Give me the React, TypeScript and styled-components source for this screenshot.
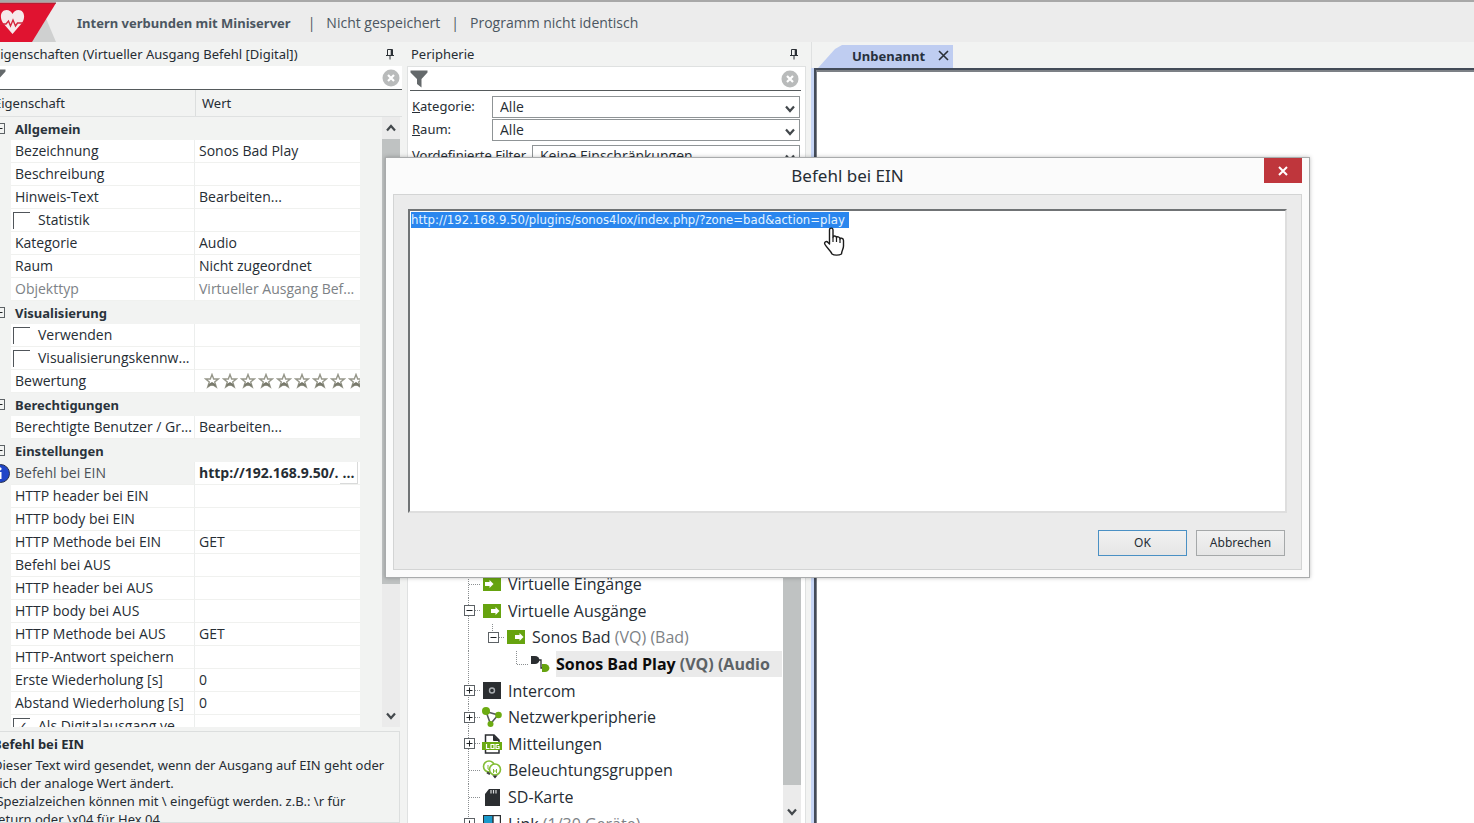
import React, { useEffect, useRef } from "react";
import styled, { createGlobalStyle, css } from "styled-components";

const GlobalStyle = createGlobalStyle`
  * { box-sizing: border-box; }
  body {
    margin: 0;
    overflow: hidden;
    background: #f2f3f2;
    color: #262d34;
    font: 13px/18px "Noto Sans", "Open Sans", sans-serif;
  }
  button, select, input, textarea { font: inherit; color: inherit; margin: 0; }
  p, h1, h2 { margin: 0; font-size: inherit; }
`;

const listFont = '"Open Sans", "Noto Sans", sans-serif';

const Shell = styled.div`
  display: flex;
  flex-direction: column;
  height: 100vh;
  overflow: hidden;
  position: relative;
`;

/* ---------- status bar ---------- */

const StatusBar = styled.header`
  display: flex;
  flex: none;
  height: 42px;
  border-top: 2px solid #a8a8a8;
  background: #ececec;
  color: #4b5661;
`;

const StatusLogo = styled.svg`
  width: 56px;
  height: 40px;
  margin-right: 21px;
`;

const StatusItem = styled.span<{ $strong?: boolean }>`
  align-self: center;
  margin-right: ${(p) => (p.$strong ? 6 : 0)}px;
  padding-top: 2px;
  white-space: nowrap;
  font-family: ${(p) => (p.$strong ? "inherit" : listFont)};
  font-size: ${(p) => (p.$strong ? 13 : 14)}px;
  font-weight: ${(p) => (p.$strong ? 700 : 400)};
  &:not(:first-of-type)::before {
    content: "|";
    margin: 0 11px;
  }
`;

/* ---------- shared panel parts ---------- */

const Workspace = styled.main`
  display: flex;
  flex: 1;
  min-height: 0;
`;

const PanelTitle = styled.div`
  display: flex;
  flex: none;
  align-items: center;
  justify-content: space-between;
  height: 24px;
  padding: 0 7px 0 4px;
  white-space: nowrap;
  h2 { font-weight: 400; }
`;

const IconButton = styled.button`
  display: grid;
  place-items: center;
  padding: 0;
  border: 0;
  background: none;
`;

const SearchBar = styled.div`
  display: flex;
  flex: none;
  align-items: center;
  height: 24px;
  padding-right: 2px;
  border-bottom: 1px solid #555a5c;
  background: #fff;
  input {
    flex: 1;
    min-width: 0;
    border: 0;
    outline: 0;
    background: none;
  }
`;

const ScrollTrack = styled.div`
  display: flex;
  flex: none;
  flex-direction: column;
  width: 18px;
  background: #ebebeb;
`;

const ScrollButton = styled(IconButton)`
  width: 18px;
  height: 22px;
`;

const ScrollThumb = styled.div<{ $size: string }>`
  height: ${(p) => p.$size};
  background: #bfc2c2;
`;

const ScrollSpace = styled.div`
  flex: 1;
`;

/* ---------- properties panel ---------- */

const PropertiesPanel = styled.section`
  display: flex;
  flex: none;
  flex-direction: column;
  width: 410px;
  margin-left: -8px;
  ${PanelTitle} { padding-left: 1px; }
  ${SearchBar} > svg { margin-left: -4px; }
`;

const ColumnHeads = styled.div`
  display: flex;
  flex: none;
  align-items: center;
  height: 27px;
  border-bottom: 1px solid #dfe1e1;
  span { padding-left: 2px; line-height: 26px; }
  span + span { padding-left: 6px; border-left: 1px solid #dcdede; }
  span:first-child { width: 203px; }
`;

const ListArea = styled.div`
  display: flex;
  flex: 1;
  min-height: 0;
  overflow: hidden;
  justify-content: space-between;
  padding-right: 2px;
`;

const PropertyTable = styled.table`
  width: 368px;
  height: max-content;
  table-layout: fixed;
  border-collapse: separate;
  border-spacing: 0;
  td, th {
    height: 23px;
    padding: 0 0 0 4px;
    overflow: hidden;
    text-align: left;
    white-space: nowrap;
  }
  td {
    font-family: ${listFont};
    font-size: 14px;
  }
`;

const GutterCell = styled.td`
  && { padding: 0; }
  width: 19px;
  svg, button { display: block; }
`;

const GroupHead = styled.th`
  color: #2a333c;
  font-weight: 700;
`;

const NameCell = styled.td<{ $active?: boolean; $dim?: boolean }>`
  width: 184px;
  border-right: 1px solid #eceeed;
  border-bottom: 1px solid #f0f1ef;
  background: ${(p) => (p.$active ? "#f2f3f2" : "#fff")};
  color: ${(p) => (p.$dim ? "#7d8286" : p.$active ? "#4b5157" : "inherit")};
`;

const ValueCell = styled.td<{ $dim?: boolean; $strong?: boolean }>`
  width: 165px;
  border-bottom: 1px solid #f0f1ef;
  background: #fff;
  color: ${(p) => (p.$dim ? "#7d8286" : "inherit")};
  font-weight: ${(p) => (p.$strong ? 700 : 400)};
`;

const ValueWithButton = styled.div`
  display: flex;
  justify-content: space-between;
  height: 22px;
  line-height: 22px;
  button {
    width: 18px;
    margin-right: 2px;
    padding: 0;
    border: solid #d9dada;
    border-width: 0 1px 1px 0;
    background: #fff;
    font-weight: 700;
    line-height: 14px;
  }
`;

const CheckLabel = styled.label`
  display: flex;
  align-items: center;
  gap: 8px;
  margin-left: -2px;
  input {
    appearance: none;
    display: grid;
    flex: none;
    width: 17px;
    height: 17px;
    border: solid #50555a;
    border-width: 1px 0 0 1px;
    background: #fff;
  }
  input:checked::before {
    content: "✓";
    padding-left: 3px;
    font: 700 13px/16px "DejaVu Sans", sans-serif;
  }
`;

const Expander = styled.button`
  display: grid;
  place-items: center;
  width: 11px;
  height: 11px;
  padding: 0;
  border: 1px solid #5d6266;
  background: #fff;
  svg { display: block; }
`;

const GroupExpander = styled(Expander)`
  && { display: grid; }
  margin-left: 2px;
  background: #f2f3f2;
`;

const Stars = styled.div`
  display: flex;
  gap: 2px;
  padding-left: 5px;
  overflow: hidden;
  svg { flex: none; }
`;

const HelpBox = styled.aside`
  flex: none;
  height: 92px;
  margin: 4px 2px 0 0;
  padding: 3px 0 0;
  border: 1px solid #dcdede;
  overflow: hidden;
  white-space: nowrap;
  h2 { margin-bottom: 3px; }
`;

/* ---------- peripherals panel ---------- */

const PeripheryPanel = styled.section`
  display: flex;
  flex: none;
  flex-direction: column;
  width: 399px;
  margin: 0 5px;
`;

const PeripheryBody = styled.div`
  display: flex;
  flex: 1;
  flex-direction: column;
  min-height: 0;
  padding: 0 4px 0 2px;
  border: 1px solid #dfe1e1;
  border-bottom: 0;
  background: #fff;
`;

const Filters = styled.div`
  display: grid;
  flex: none;
  gap: 1px;
  padding: 5px 1px 0 2px;
`;

const FilterRow = styled.div<{ $label: number }>`
  display: grid;
  grid-template-columns: ${(p) => p.$label}px 1fr;
  height: 22px;
  line-height: 20px;
  white-space: nowrap;
  &:last-child { margin-top: 3px; }
`;

const SelectBox = styled.span`
  display: grid;
  align-items: center;
  select, svg { grid-area: 1 / 1; }
  select {
    appearance: none;
    width: 100%;
    height: 22px;
    padding: 0 7px;
    border: 1px solid #8f9496;
    border-radius: 0;
    background: #fff;
    font-family: ${listFont};
    font-size: 14px;
    line-height: 20px;
  }
  svg { justify-self: end; margin: 4px 5px 0 0; pointer-events: none; }
`;

const TreeArea = styled.div`
  display: flex;
  flex: 1;
  min-height: 0;
  margin-top: 20px;
  overflow: hidden;
`;

const TreeList = styled.ul`
  display: grid;
  flex: 1;
  grid-template-rows: repeat(10, 1fr);
  align-self: flex-end;
  height: 266px;
  min-width: 0;
  margin: 0 1px -14px 0;
  padding: 0 0 0 47px;
  list-style: none;
  font-family: ${listFont};
  font-size: 16px;
  overflow: hidden;
`;

const TreeItem = styled.li`
  display: flex;
  align-items: stretch;
  min-width: 0;
`;

type GuideKind = "line" | "tee" | "end" | "none";

const dotsDown = "repeating-linear-gradient(#8b8f91 0 1px, transparent 1px 2px)";
const dotsAcross = "repeating-linear-gradient(90deg, #8b8f91 0 1px, transparent 1px 2px)";

const Guide = styled.span<{ $kind: GuideKind }>`
  display: grid;
  flex: none;
  place-items: center;
  width: 24px;
  background-repeat: no-repeat;
  ${(p) =>
    p.$kind === "line" &&
    css`background-image: ${dotsDown}; background-size: 1px 100%; background-position: 11px 0;`}
  ${(p) =>
    p.$kind === "tee" &&
    css`
      background-image: ${dotsDown}, ${dotsAcross};
      background-size: 1px 100%, 12px 1px;
      background-position: 11px 0, 12px 50%;
    `}
  ${(p) =>
    p.$kind === "end" &&
    css`
      background-image: ${dotsDown}, ${dotsAcross};
      background-size: 1px 50%, 12px 1px;
      background-position: 11px 0, 12px 50%;
    `}
`;

const TreeIcon = styled.span`
  display: grid;
  flex: none;
  place-items: center;
  width: 24px;
  padding-right: 2px;
`;

const TreeText = styled.span<{ $selected?: boolean }>`
  display: flex;
  flex: ${(p) => (p.$selected ? 1 : "none")};
  align-items: center;
  margin-left: 3px;
  overflow: hidden;
  white-space: pre;
  background: ${(p) => (p.$selected ? "#eaeaea" : "none")};
  color: ${(p) => (p.$selected ? "#0c0c0c" : "inherit")};
  font-weight: ${(p) => (p.$selected ? 700 : 400)};
  small {
    color: ${(p) => (p.$selected ? "#5c6266" : "#7d8286")};
    font-size: inherit;
  }
`;

/* ---------- document area ---------- */

const DocumentArea = styled.section`
  display: flex;
  flex: 1;
  flex-direction: column;
  min-width: 0;
`;

const TabStrip = styled.div`
  flex: none;
  height: 26px;
  padding: 3px 0 0 6px;
  border-left: 1px solid #dfe1e1;
`;

const Tab = styled.div`
  display: flex;
  align-items: center;
  justify-content: space-between;
  width: 135px;
  height: 23px;
  padding: 0 4px 2px 34px;
  background: #bfcdf1;
  clip-path: polygon(0 100%, 17px 4px, 24px 0, 100% 0, 100% 100%);
  color: #27303c;
  font-weight: 700;
`;

const Canvas = styled.div`
  flex: 1;
  border: solid #434b58;
  border-width: 2px 0 0 2px;
  background: #fff;
  box-shadow: inset 1px 2px #7c8086;
`;

const CanvasFrame = styled.div`
  display: flex;
  flex: 1;
  border-left: 3px solid #c6d5f5;
`;

/* ---------- dialog ---------- */

const Dialog = styled.section`
  position: absolute;
  top: 157px;
  left: 385px;
  width: 925px;
  padding: 0 7px 7px;
  border: 1px solid #a9abac;
  background: #fbfbfb;
  box-shadow: 0 0 4px rgba(0, 0, 0, 0.25);
`;

const DialogTitle = styled.div`
  display: grid;
  grid-template-columns: 1fr auto 1fr;
  height: 36px;
  h1 {
    grid-column: 2;
    align-self: center;
    font-size: 17px;
    font-weight: 400;
  }
`;

const CloseButton = styled(IconButton)`
  justify-self: end;
  width: 38px;
  height: 25px;
  background: #bf363c;
`;

const DialogBody = styled.div`
  padding: 14px 14px 13px;
  border: 1px solid #d3d4d4;
  background: #ebebeb;
`;

const CommandInput = styled.textarea`
  display: block;
  width: 100%;
  height: 304px;
  padding: 1px;
  border: 2px solid;
  border-color: #707375 #dedede #dedede #707375;
  border-radius: 0;
  outline: 0;
  resize: none;
  background: #fff;
  caret-color: transparent;
  color: #1c1c1c;
  font: 13px/16px "DejaVu Sans Condensed", "DejaVu Sans", sans-serif;
  &::selection { background: #2a86ee; color: #e4f4ff; }
`;

const DialogButtons = styled.div`
  display: flex;
  justify-content: flex-end;
  gap: 9px;
  padding: 17px 2px 0 0;
`;

const DialogButton = styled.button<{ $primary?: boolean }>`
  width: 89px;
  height: 26px;
  padding: 0;
  border: 1px solid ${(p) => (p.$primary ? "#4a90c4" : "#a5a8a9")};
  background: linear-gradient(#f1f1f1, #e5e5e5);
  font-size: 12px;
`;

const HandPointer = styled.svg`
  position: absolute;
  top: 227px;
  left: 823px;
  width: 22px;
  height: 29px;
  pointer-events: none;
`;

/* ---------- drawings ---------- */

const PinIcon = () => (
  <svg width="10" height="12" viewBox="0 0 10 12" fill="none" stroke="#2c3136" aria-hidden="true">
    <path d="M2.5 7V1.5H7.5V7M1 7.5H9M5 8V11.5" />
    <path d="M6.5 1.5V7" strokeWidth="1.6" />
  </svg>
);

const ClearIcon = () => (
  <svg width="18" height="18" viewBox="0 0 18 18" aria-hidden="true">
    <circle cx="9" cy="9" r="8.5" fill="#b9bbbb" />
    <path d="M6 6L12 12M12 6L6 12" stroke="#fff" strokeWidth="2.2" />
  </svg>
);

const FunnelIcon = () => (
  <svg width="18" height="18" viewBox="0 0 18 18" aria-hidden="true">
    <path d="M0.500 0.500H17.500V2.500L11.500 9V17.500L7 14V9L0.500 2.500Z" fill="#64696b" />
  </svg>
);

const Chevron = ({ up }: { up?: boolean }) => (
  <svg width="10" height="8" viewBox="0 0 10 8" fill="none" stroke="#43484c" strokeWidth="2.2" aria-hidden="true">
    <path d={up ? "M1 6.500L5 2L9 6.500" : "M1 1.500L5 6L9 1.500"} />
  </svg>
);

const SignIcon = ({ plus }: { plus?: boolean }) => (
  <svg width="7" height="7" viewBox="0 0 7 7" stroke="#1f2326" aria-hidden="true">
    <path d={plus ? "M0.500 3.500H6.500M3.500 0.500V6.500" : "M0.500 3.500H6.500"} />
  </svg>
);

const InfoIcon = () => (
  <svg width="18" height="19" viewBox="0 0 18 19" aria-hidden="true">
    <circle cx="8.500" cy="9.500" r="9" fill="#1f45c8" stroke="#27304c" />
    <circle cx="8" cy="4.800" r="1.600" fill="#fff" />
    <path d="M6 8H9.500V15H7V9.500H6Z" fill="#fff" />
  </svg>
);

const StarIcon = () => (
  <svg width="16" height="16" viewBox="0 0 16 16" aria-hidden="true">
    <path
      d="M8 1.500L9.700 6H14.300L10.700 9L12.300 14L8 11.200L3.700 14L5.300 9L1.700 6H6.300Z"
      fill="#fff"
      stroke="#96978a"
      strokeWidth="1.400"
    />
    <path d="M4.800 11L8 9L11.200 11L12.200 14L8 11.600L3.800 14Z" fill="#77786a" />
  </svg>
);

const LinkIcon = ({ out }: { out?: boolean }) => (
  <svg width="18" height="14" viewBox="0 0 18 14" aria-hidden="true">
    <rect width="18" height="14" fill="#66a30f" />
    <path
      d={out ? "M8 5H12.500V3L16.500 7L12.500 11V9H8Z" : "M2 5H6.500V3L10.500 7L6.500 11V9H2Z"}
      fill="#fff"
    />
  </svg>
);

const CommandIcon = () => (
  <svg width="20" height="18" viewBox="0 0 20 18" aria-hidden="true">
    <path d="M1 1H5C8 1 9 3 9.500 5C9 7.500 7.500 9 5 9H1Z" fill="#2b2e31" />
    <path d="M9 5H11V13H13" fill="none" stroke="#2b2e31" strokeWidth="1.300" />
    <path d="M12 9H15C17.500 9 19 11 19.500 13C19 15.500 17.500 17 15 17H12Z" fill="#66a30f" />
  </svg>
);

const IntercomIcon = () => (
  <svg width="18" height="17" viewBox="0 0 18 17" aria-hidden="true">
    <rect width="18" height="17" fill="#2b2e31" />
    <circle cx="9" cy="8.500" r="2.500" fill="none" stroke="#a9adb0" strokeWidth="1.400" />
  </svg>
);

const NetworkIcon = () => (
  <svg width="20" height="20" viewBox="0 0 20 20" aria-hidden="true">
    <path d="M4 4.500L16 8L8.500 17Z" fill="none" stroke="#54585b" strokeWidth="1.600" />
    <circle cx="4" cy="4" r="4" fill="#6cab12" />
    <circle cx="16.500" cy="8" r="3.300" fill="#6cab12" />
    <circle cx="8.500" cy="17" r="3" fill="#6cab12" />
  </svg>
);

const LogIcon = () => (
  <svg width="20" height="20" viewBox="0 0 20 20" aria-hidden="true">
    <path d="M3.500 1H12L17 6V19H3.500Z" fill="#fff" stroke="#2b2e31" strokeWidth="1.500" />
    <path d="M11.500 1V6.500H17" fill="#2b2e31" stroke="#2b2e31" />
    <rect x="0" y="8" width="20" height="8" fill="#6cab12" />
    <path d="M4.500 10V14.500H7.500M9 10.500H12V14.500H9ZM17 10.500H14V14.500H17V12.500H15.500" fill="none" stroke="#fff" strokeWidth="1.200" />
  </svg>
);

const BulbsIcon = () => (
  <svg width="20" height="20" viewBox="0 0 20 20" fill="none" aria-hidden="true">
    <circle cx="7" cy="6.500" r="5.500" fill="#fff" stroke="#83bd35" strokeWidth="1.600" />
    <path d="M5 12.500L8 14" stroke="#444" strokeWidth="2" />
    <circle cx="13" cy="9.500" r="5.500" fill="#fff" stroke="#83bd35" strokeWidth="1.600" />
    <path d="M6 5V9L8 10M11.500 9V13M14.500 9V13M11.500 11H14.500" stroke="#83bd35" />
    <path d="M10.500 15.500H15.500L13 18.500Z" fill="#333" />
  </svg>
);

const SdIcon = () => (
  <svg width="16" height="17" viewBox="0 0 16 17" aria-hidden="true">
    <path d="M5 0H16V17H1V5Z" fill="#2b2e31" />
    <path d="M7 1V4.500M9.500 1V4.500M12 1V4.500" stroke="#dadcdd" strokeWidth="1.200" />
  </svg>
);

const ClientIcon = () => (
  <svg width="18" height="18" viewBox="0 0 18 18" aria-hidden="true">
    <rect x="0.500" y="0.500" width="17" height="17" fill="#fff" stroke="#2b2e31" strokeWidth="1.400" />
    <rect x="1" y="1" width="9" height="16" fill="#1b9acb" />
    <path d="M10 1V17" stroke="#2b2e31" strokeWidth="1.400" />
  </svg>
);

/* ---------- data ---------- */

type Property = {
  name: string;
  value?: string;
  group?: boolean;
  check?: boolean;
  checked?: boolean;
  dim?: boolean;
  active?: boolean;
  rating?: boolean;
};

const properties: Property[] = [
  { name: "Allgemein", group: true },
  { name: "Bezeichnung", value: "Sonos Bad Play" },
  { name: "Beschreibung" },
  { name: "Hinweis-Text", value: "Bearbeiten..." },
  { name: "Statistik", check: true },
  { name: "Kategorie", value: "Audio" },
  { name: "Raum", value: "Nicht zugeordnet" },
  { name: "Objekttyp", value: "Virtueller Ausgang Bef...", dim: true },
  { name: "Visualisierung", group: true },
  { name: "Verwenden", check: true },
  { name: "Visualisierungskennw...", check: true },
  { name: "Bewertung", rating: true },
  { name: "Berechtigungen", group: true },
  { name: "Berechtigte Benutzer / Gr...", value: "Bearbeiten..." },
  { name: "Einstellungen", group: true },
  { name: "Befehl bei EIN", value: "http://192.168.9.50/.", active: true },
  { name: "HTTP header bei EIN" },
  { name: "HTTP body bei EIN" },
  { name: "HTTP Methode bei EIN", value: "GET" },
  { name: "Befehl bei AUS" },
  { name: "HTTP header bei AUS" },
  { name: "HTTP body bei AUS" },
  { name: "HTTP Methode bei AUS", value: "GET" },
  { name: "HTTP-Antwort speichern" },
  { name: "Erste Wiederholung [s]", value: "0" },
  { name: "Abstand Wiederholung [s]", value: "0" },
  { name: "Als Digitalausgang ve", check: true, checked: true },
];

type Node = {
  guides: GuideKind[];
  open?: boolean;
  closed?: boolean;
  icon: React.ReactNode;
  text: string;
  note?: string;
  selected?: boolean;
};

const nodes: Node[] = [
  { guides: ["tee"], icon: <LinkIcon />, text: "Virtuelle Eingänge" },
  { guides: ["tee"], open: true, icon: <LinkIcon out />, text: "Virtuelle Ausgänge" },
  { guides: ["line", "end"], open: true, icon: <LinkIcon out />, text: "Sonos Bad", note: " (VQ) (Bad)" },
  { guides: ["line", "none", "end"], icon: <CommandIcon />, text: "Sonos Bad Play", note: " (VQ) (Audio", selected: true },
  { guides: ["tee"], closed: true, icon: <IntercomIcon />, text: "Intercom" },
  { guides: ["tee"], closed: true, icon: <NetworkIcon />, text: "Netzwerkperipherie" },
  { guides: ["tee"], closed: true, icon: <LogIcon />, text: "Mitteilungen" },
  { guides: ["tee"], icon: <BulbsIcon />, text: "Beleuchtungsgruppen" },
  { guides: ["tee"], icon: <SdIcon />, text: "SD-Karte" },
  { guides: ["tee"], closed: true, icon: <ClientIcon />, text: "Link", note: " (1/30 Geräte)" },
];

/* ---------- components ---------- */

function PropertyRow({ item }: { item: Property }) {
  if (item.group) {
    return (
      <tr>
        <GutterCell>
          <GroupExpander aria-label={`${item.name} zuklappen`}>
            <SignIcon />
          </GroupExpander>
        </GutterCell>
        <GroupHead colSpan={2}>{item.name}</GroupHead>
      </tr>
    );
  }
  return (
    <tr>
      <GutterCell>{item.active && <InfoIcon />}</GutterCell>
      <NameCell $active={item.active} $dim={item.dim}>
        {item.check ? (
          <CheckLabel>
            <input type="checkbox" defaultChecked={item.checked} />
            {item.name}
          </CheckLabel>
        ) : (
          item.name
        )}
      </NameCell>
      <ValueCell $dim={item.dim} $strong={item.active}>
        {item.rating && (
          <Stars>
            {Array.from({ length: 9 }, (_, i) => (
              <StarIcon key={i} />
            ))}
          </Stars>
        )}
        {item.active ? (
          <ValueWithButton>
            {item.value}
            <button aria-label="Befehl bearbeiten">...</button>
          </ValueWithButton>
        ) : (
          item.value
        )}
      </ValueCell>
    </tr>
  );
}

function Properties() {
  return (
    <PropertiesPanel>
      <PanelTitle>
        <h2>Eigenschaften (Virtueller Ausgang Befehl [Digital])</h2>
        <IconButton aria-label="Eigenschaften anheften"><PinIcon /></IconButton>
      </PanelTitle>
      <SearchBar>
        <FunnelIcon />
        <input type="text" aria-label="Eigenschaften filtern" />
        <IconButton aria-label="Filter löschen"><ClearIcon /></IconButton>
      </SearchBar>
      <ColumnHeads>
        <span>Eigenschaft</span>
        <span>Wert</span>
      </ColumnHeads>
      <ListArea>
        <PropertyTable>
          <colgroup>
            <col width="19" />
            <col width="184" />
            <col width="165" />
          </colgroup>
          <tbody>
            {properties.map((item) => (
              <PropertyRow key={item.name} item={item} />
            ))}
          </tbody>
        </PropertyTable>
        <ScrollTrack>
          <ScrollButton aria-label="Nach oben"><Chevron up /></ScrollButton>
          <ScrollThumb $size="73%" />
          <ScrollSpace />
          <ScrollButton aria-label="Nach unten"><Chevron /></ScrollButton>
        </ScrollTrack>
      </ListArea>
      <HelpBox>
        <h2>Befehl bei EIN</h2>
        <p>
          Dieser Text wird gesendet, wenn der Ausgang auf EIN geht oder
          <br />
          sich der analoge Wert ändert.
          <br />
          &nbsp;Spezialzeichen können mit \ eingefügt werden. z.B.: \r für
          <br />
          return oder \x04 für Hex 04
        </p>
      </HelpBox>
    </PropertiesPanel>
  );
}

function Filter({ id, label, value, labelWidth }: { id: string; label: React.ReactNode; value: string; labelWidth: number }) {
  return (
    <FilterRow $label={labelWidth}>
      <label htmlFor={id}>{label}</label>
      <SelectBox>
        <select id={id}>
          <option>{value}</option>
        </select>
        <Chevron />
      </SelectBox>
    </FilterRow>
  );
}

function Periphery() {
  return (
    <PeripheryPanel>
      <PanelTitle>
        <h2>Peripherie</h2>
        <IconButton aria-label="Peripherie anheften"><PinIcon /></IconButton>
      </PanelTitle>
      <PeripheryBody>
        <SearchBar>
          <FunnelIcon />
          <input type="text" aria-label="Peripherie filtern" />
          <IconButton aria-label="Filter löschen"><ClearIcon /></IconButton>
        </SearchBar>
        <Filters>
          <Filter id="category" label={<><u>K</u>ategorie:</>} value="Alle" labelWidth={80} />
          <Filter id="room" label={<><u>R</u>aum:</>} value="Alle" labelWidth={80} />
          <Filter id="preset" label="Vordefinierte Filter" value="Keine Einschränkungen" labelWidth={120} />
        </Filters>
        <TreeArea>
          <TreeList>
            {nodes.map((node) => (
              <TreeItem key={node.text}>
                {node.guides.map((kind, i) => (
                  <Guide key={i} $kind={kind}>
                    {i === node.guides.length - 1 && (node.open || node.closed) && (
                      <Expander aria-label={`${node.text} ${node.open ? "zuklappen" : "aufklappen"}`}>
                        <SignIcon plus={node.closed} />
                      </Expander>
                    )}
                  </Guide>
                ))}
                <TreeIcon>{node.icon}</TreeIcon>
                <TreeText $selected={node.selected}>
                  {node.text}
                  {node.note && <small>{node.note}</small>}
                </TreeText>
              </TreeItem>
            ))}
          </TreeList>
          <ScrollTrack>
            <ScrollThumb $size="94%" />
            <ScrollSpace />
            <ScrollButton aria-label="Nach unten"><Chevron /></ScrollButton>
          </ScrollTrack>
        </TreeArea>
      </PeripheryBody>
    </PeripheryPanel>
  );
}

function CommandDialog() {
  const input = useRef<HTMLTextAreaElement>(null);
  useEffect(() => {
    input.current?.focus();
    input.current?.select();
  }, []);
  return (
    <Dialog role="dialog" aria-labelledby="dialog-title">
      <DialogTitle>
        <h1 id="dialog-title">Befehl bei EIN</h1>
        <CloseButton aria-label="Schließen">
          <svg width="10" height="10" viewBox="0 0 10 10" stroke="#fff" strokeWidth="2" aria-hidden="true">
            <path d="M1 1L9 9M9 1L1 9" />
          </svg>
        </CloseButton>
      </DialogTitle>
      <DialogBody>
        <CommandInput
          ref={input}
          aria-labelledby="dialog-title"
          spellCheck={false}
          defaultValue="http://192.168.9.50/plugins/sonos4lox/index.php/?zone=bad&action=play "
        />
        <DialogButtons>
          <DialogButton $primary>OK</DialogButton>
          <DialogButton>Abbrechen</DialogButton>
        </DialogButtons>
      </DialogBody>
    </Dialog>
  );
}

export default function App() {
  return (
    <Shell>
      <GlobalStyle />
      <StatusBar>
        <StatusLogo viewBox="0 0 56 40" aria-hidden="true">
          <path d="M45 14L56 40H30Z" fill="#cfd0d0" />
          <path d="M0 1H56L32 40H0Z" fill="#e01330" />
          <path d="M0 1H56" stroke="#8d2a36" />
          <path d="M12.500 32L3 21C-1 15 1 8 6.500 8C9.500 8 11.500 10 12.500 12C13.500 10 15.500 8 18.500 8C24 8 26 15 22 21Z" fill="#f6e9ea" />
          <path d="M0 22H6L8.500 19L10.500 24L13 18L15.500 24L17.500 21H24" fill="none" stroke="#d4253c" strokeWidth="1.400" />
        </StatusLogo>
        <StatusItem $strong>Intern verbunden mit Miniserver</StatusItem>
        <StatusItem>Nicht gespeichert</StatusItem>
        <StatusItem>Programm nicht identisch</StatusItem>
      </StatusBar>
      <Workspace>
        <Properties />
        <Periphery />
        <DocumentArea>
          <TabStrip>
            <Tab>
              Unbenannt
              <IconButton aria-label="Unbenannt schließen">
                <svg width="11" height="11" viewBox="0 0 11 11" stroke="#2b3138" strokeWidth="1.600" aria-hidden="true">
                  <path d="M1 1L10 10M10 1L1 10" />
                </svg>
              </IconButton>
            </Tab>
          </TabStrip>
          <CanvasFrame>
            <Canvas />
          </CanvasFrame>
        </DocumentArea>
      </Workspace>
      <CommandDialog />
      <HandPointer viewBox="0 0 22 29" aria-hidden="true">
        <path
          d="M6.500 17V3C6.500 0.500 10 0.500 10 3V10.500C10 8.500 13.500 8.500 13.500 11C13.500 9 17 9.500 17 12C17 10.500 20.500 11 20.500 13.500V19C20.500 22 18.500 24 18.500 27C16 28.500 11 28.500 9 27C8 24 4 21 2 17.500C0.500 15 3.500 13.500 5 15.500Z"
          fill="#fff"
          stroke="#1b1b1b"
          strokeWidth="1.400"
          strokeLinejoin="round"
        />
        <path d="M10 10.500V15M13.500 11V15M17 12V16" stroke="#1b1b1b" strokeWidth="1.200" />
      </HandPointer>
    </Shell>
  );
}
